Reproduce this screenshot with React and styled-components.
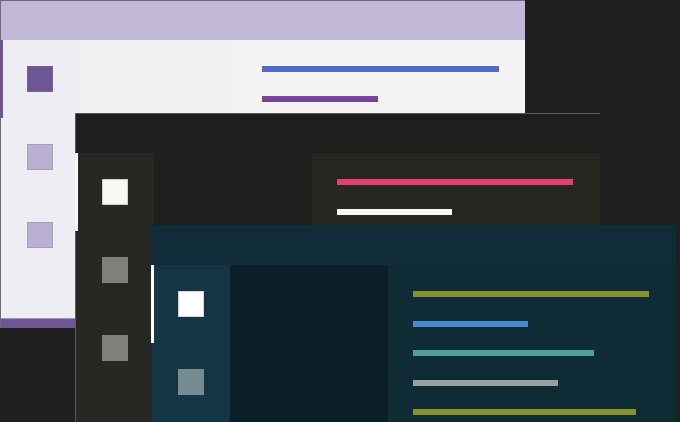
import React from "react";
import styled, { createGlobalStyle } from "styled-components";

const GlobalStyle = createGlobalStyle`
  html, body {
    margin: 0;
    padding: 0;
    background: #1f1f1f;
    overflow: hidden;
    font-family: "Liberation Sans", Arial, sans-serif;
  }
`;

const themes = {
  light: {
    border: "#6d6a73",
    title: "#c4b8d8",
    activity: "#ededf3",
    sidebar: "#f1f1f1",
    editor: "#f4f4f4",
    accent: "#6e5694",
    iconOn: "#6e5694",
    iconOff: "#bab0d2",
    status: "#6e5694",
    statusLine: "#a597c2",
    lines: [
      { color: "#536bc5", width: 237 },
      { color: "#764599", width: 116 },
    ],
  },
  monokai: {
    border: "#5a5a57",
    title: "#1e1e1d",
    activity: "#272723",
    sidebar: "#1e1e1d",
    editor: "#272722",
    accent: "#f7f8f2",
    iconOn: "#f7f8f2",
    iconOff: "#7f807a",
    lines: [
      { color: "#e2416f", width: 236 },
      { color: "#f7f8f2", width: 115 },
    ],
  },
  ocean: {
    border: "#0f2c38",
    title: "#0f2c38",
    activity: "#143644",
    sidebar: "#0a1f28",
    editor: "#0f2b36",
    accent: "#ffffff",
    iconOn: "#ffffff",
    iconOff: "#758c93",
    lines: [
      { color: "#86922e", width: 236 },
      { color: "#4a8ad3", width: 115 },
      { color: "#4f9f95", width: 181 },
      { color: "#99a0a0", width: 145 },
      { color: "#86922e", width: 223 },
    ],
  },
};

const Desktop = styled.div`
  position: relative;
  width: 680px;
  height: 422px;
  overflow: hidden;
  background: #1f1f1f;
`;

const Window = styled.div`
  position: absolute;
  left: ${(p) => p.$x}px;
  top: ${(p) => p.$y}px;
  width: 525px;
  height: 328px;
  display: flex;
  flex-direction: column;
  box-sizing: border-box;
  border-top: 1px solid ${(p) => p.$t.border};
  border-left: 1px solid ${(p) => p.$t.border};
  background: ${(p) => p.$t.editor};
`;

const TitleBar = styled.div`
  height: 39px;
  flex-shrink: 0;
  background: ${(p) => p.$t.title};
`;

const Body = styled.div`
  flex: 1;
  display: flex;
  min-height: 0;
`;

const ActivityBar = styled.div`
  width: 78px;
  flex-shrink: 0;
  display: flex;
  flex-direction: column;
  background: ${(p) => p.$t.activity};
`;

const Slot = styled.div`
  position: relative;
  height: 78px;
  display: flex;
  align-items: center;
  justify-content: center;

  &::before {
    content: "";
    display: ${(p) => (p.$active ? "block" : "none")};
    position: absolute;
    left: -1px;
    top: 0;
    bottom: 0;
    width: 3px;
    background: ${(p) => p.$t.accent};
  }
`;

const Icon = styled.div`
  width: 26px;
  height: 26px;
  box-sizing: border-box;
  background: ${(p) => p.$color};
  border: 1px solid rgba(128, 128, 128, 0.35);
`;

const Sidebar = styled.div`
  width: 158px;
  flex-shrink: 0;
  background: ${(p) => p.$t.sidebar};
`;

const Editor = styled.div`
  flex: 1;
  display: flex;
  flex-direction: column;
  gap: 23.5px;
  padding: 26px 0 0 25px;
  background: ${(p) => p.$t.editor};
`;

const CodeLine = styled.div`
  height: 6px;
  width: ${(p) => p.$w}px;
  background: ${(p) => p.$color};
`;

const StatusBar = styled.div`
  height: 9px;
  flex-shrink: 0;
  background: ${(p) => p.$t.status};
  border-top: 1px solid ${(p) => p.$t.statusLine};
`;

const EditorWindow = ({ theme, x, y }) => {
  const t = themes[theme];
  return (
    <Window $t={t} $x={x} $y={y}>
      <TitleBar $t={t} />
      <Body>
        <ActivityBar $t={t}>
          <Slot $t={t} $active>
            <Icon $color={t.iconOn} />
          </Slot>
          <Slot $t={t}>
            <Icon $color={t.iconOff} />
          </Slot>
          <Slot $t={t}>
            <Icon $color={t.iconOff} />
          </Slot>
        </ActivityBar>
        <Sidebar $t={t} />
        <Editor $t={t}>
          {t.lines.map((l, i) => (
            <CodeLine key={i} $color={l.color} $w={l.width} />
          ))}
        </Editor>
      </Body>
      {t.status && <StatusBar $t={t} />}
    </Window>
  );
};

const App = () => {
  return (
    <>
      <GlobalStyle />
      <Desktop>
        <EditorWindow theme="light" x={0} y={0} />
        <EditorWindow theme="monokai" x={75} y={113} />
        <EditorWindow theme="ocean" x={151} y={225} />
      </Desktop>
    </>
  );
};

export default App;
